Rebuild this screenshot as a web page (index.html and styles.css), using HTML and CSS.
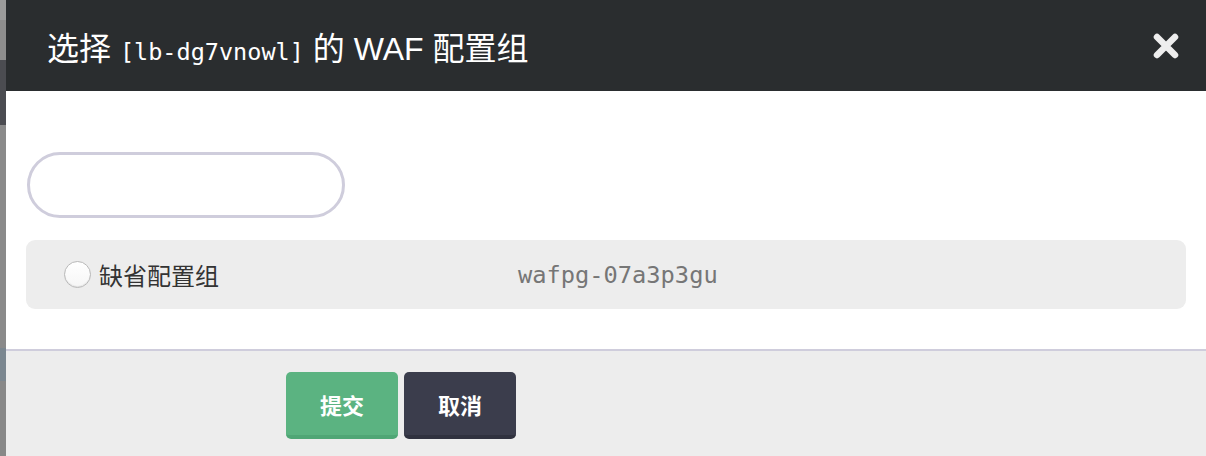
FILE: index.html
```html
<!DOCTYPE html>
<html lang="zh-CN">
<head>
<meta charset="utf-8">
<title>选择 WAF 配置组</title>
<link rel="stylesheet" href="styles.css">
</head>
<body>
<div class="page">
  <div class="backdrop"></div>
  <div class="modal">
    <div class="modal-header">
      <h2 class="modal-title">选择 <span class="mono">[lb-dg7vnowl]</span> 的 WAF 配置组</h2>
      <button class="close" aria-label="关闭">
        <svg width="26" height="26" viewBox="0 0 26 26"><path d="M4 4 L22 22 M22 4 L4 22" stroke="#eeeeee" stroke-width="6.5" stroke-linecap="round" fill="none"/></svg>
      </button>
    </div>
    <div class="modal-body">
      <input class="search" type="text">
      <label class="group-row">
        <span class="radio"></span>
        <span class="group-name">缺省配置组</span>
        <span class="group-id">wafpg-07a3p3gu</span>
      </label>
    </div>
    <div class="modal-footer">
      <button class="btn btn-submit">提交</button>
      <button class="btn btn-cancel">取消</button>
    </div>
  </div>
</div>
</body>
</html>
```
FILE: styles.css
```css
html, body {
  margin: 0;
  padding: 0;
  height: 100%;
  overflow: hidden;
}
body {
  font-family: "Liberation Sans", "Noto Sans CJK SC", sans-serif;
  background: #888888;
}
.page {
  display: flex;
  height: 456px;
}
.backdrop {
  width: 6px;
  flex: 0 0 6px;
  background: linear-gradient(to bottom,
    #9b9b9b 0, #9b9b9b 20px,
    #8d8d8d 20px, #8d8d8d 60px,
    #4b4c51 60px, #4b4c51 125px,
    #8a8a8a 125px, #8a8a8a 348px,
    #7b8790 348px, #7b8790 381px,
    #888888 381px);
}
.modal {
  flex: 1;
  display: flex;
  flex-direction: column;
  background: #fff;
}
.modal-header {
  height: 91px;
  flex: 0 0 91px;
  background: #2a2d2f;
  display: flex;
  align-items: center;
  justify-content: space-between;
  padding: 0 27px 0 41px;
}
.modal-title {
  margin: 0;
  color: #ffffff;
  font-size: 32px;
  font-weight: normal;
  letter-spacing: 0;
}
.mono {
  font-family: "DejaVu Sans Mono", "Liberation Mono", monospace;
  font-size: 23.5px;
}
.close {
  border: 0;
  background: transparent;
  padding: 0;
  width: 26px;
  height: 26px;
  display: flex;
  cursor: pointer;
}
.modal-body {
  padding: 61px 20px 40px 20px;
  display: flex;
  flex-direction: column;
  align-items: flex-start;
  gap: 22px;
}
.search {
  box-sizing: border-box;
  width: 318px;
  height: 66px;
  margin-left: 1px;
  border: 3px solid #cfcddc;
  border-radius: 33px;
  background: #fff;
  outline: none;
  padding: 0 20px;
  font-size: 20px;
}
.group-row {
  box-sizing: border-box;
  align-self: stretch;
  height: 69px;
  background: #ededed;
  border-radius: 9px;
  display: flex;
  align-items: center;
  padding-left: 38px;
}
.radio {
  box-sizing: border-box;
  width: 27px;
  height: 27px;
  border-radius: 50%;
  border: 1px solid #b9b9b9;
  background: linear-gradient(#ffffff, #f6f6f6);
  box-shadow: inset 0 -1px 1px rgba(0,0,0,0.08);
  margin-right: 8px;
}
.group-name {
  font-size: 24px;
  color: #333333;
  width: 419px;
}
.group-id {
  font-family: "DejaVu Sans Mono", "Liberation Mono", monospace;
  font-size: 23.7px;
  color: #767676;
}
.modal-footer {
  flex: 1;
  background: #ededed;
  border-top: 2px solid #cfcddc;
  display: flex;
  align-items: flex-start;
  gap: 6px;
  padding: 21px 0 0 280px;
}
.btn {
  box-sizing: border-box;
  width: 112px;
  height: 67px;
  border: 0;
  border-radius: 5px;
  color: #ffffff;
  font-family: "Noto Sans CJK SC", sans-serif;
  font-size: 22px;
  font-weight: bold;
  cursor: pointer;
  padding: 0;
}
.btn-submit {
  background: #5bb381;
  border-bottom: 4px solid #4fa675;
}
.btn-cancel {
  background: #3b3d4c;
  border-bottom: 4px solid #30323f;
}
```
